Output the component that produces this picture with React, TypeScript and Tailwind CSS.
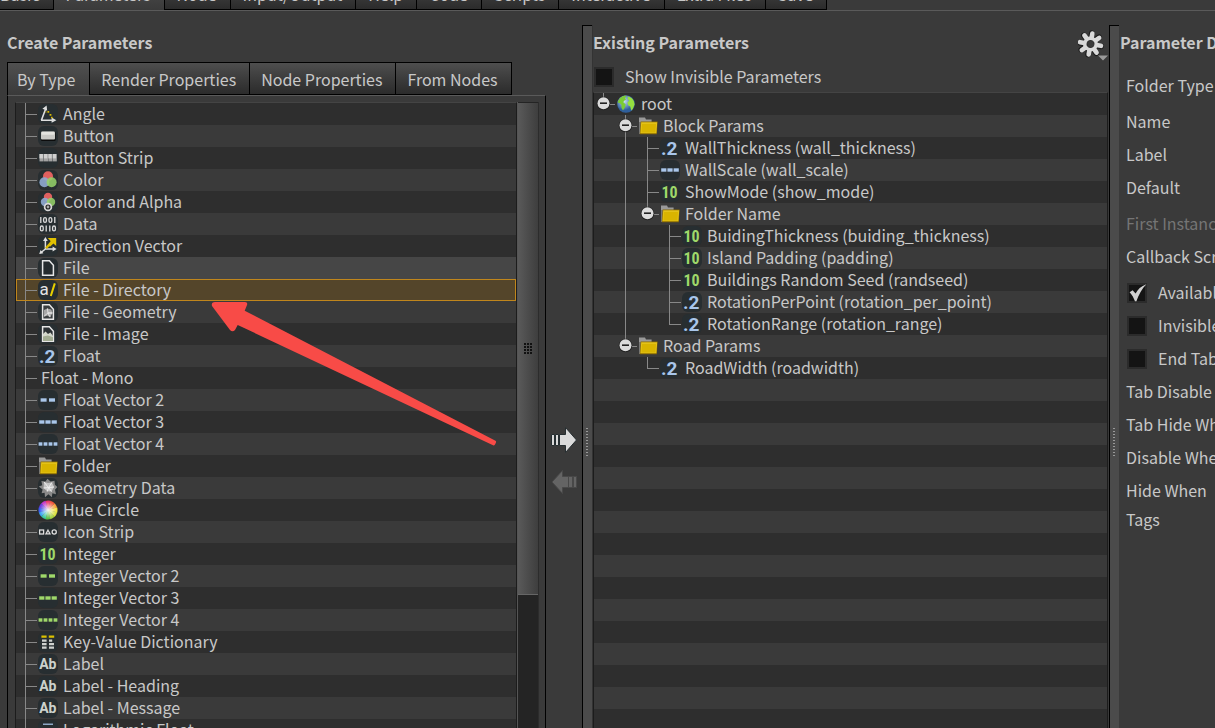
import React, { useState } from "react";

type Guide = "blank" | "line" | "tee" | "ell" | "root" | "open" | "last";

const GREEN = "#9fd86a";
const BLUE = "#a9c6ea";

function GuideCell({ kind }: { kind: Guide }) {
  const node = kind === "root" || kind === "open" || kind === "last";
  const up = kind !== "blank";
  const down = kind === "line" || kind === "tee" || kind === "open";
  return (
    <svg className="h-[22px] w-[22px] shrink-0" viewBox="0 0 22 22" aria-hidden="true">
      <g fill="#888">
        {up && <rect x="9" y="0" width="1" height="11" />}
        {down && <rect x="9" y="11" width="1" height="11" />}
        {(kind === "tee" || kind === "ell") && <rect x="9" y="11" width="12" height="1" />}
        {node && <rect x="15" y="11" width="6" height="1" />}
      </g>
      {node && (
        <g>
          <circle cx="9.5" cy="10.5" r="6.8" fill="#222" />
          <circle cx="9.5" cy="10.2" r="6" fill="#dcdcdc" />
          <rect x="6" y="9.4" width="7" height="1.6" fill="#222" />
        </g>
      )}
    </svg>
  );
}

function dashes(xs: number[], w: number, color: string) {
  return xs.map((x) => <rect key={x} x={x} y="8.3" width={w} height="3.4" fill={color} />);
}

function ColorDiscs({ r, cy }: { r: number; cy: number }) {
  return (
    <g>
      <circle cx="10" cy={cy} r={r} fill="#e0605f" />
      <circle cx={10 - r * 0.72} cy={cy + r * 1.2} r={r} fill="#8ea9cf" fillOpacity=".92" />
      <circle cx={10 + r * 0.72} cy={cy + r * 1.2} r={r} fill="#94d069" fillOpacity=".88" />
    </g>
  );
}

const hues = ["#f0e040", "#f5a03a", "#f0563a", "#e83a6c", "#c43ac8", "#6a3ae0", "#3a5cf0", "#3aa4f0", "#3ac8a0", "#5cc048", "#a4d040", "#d8e040"];

function sheet(fill: string) {
  return <path d="M4.6 2.8h6.8l4 4.4v10h-10.8z" fill={fill} stroke="#e6e6e6" strokeWidth="1.5" />;
}

function glyph(name: string) {
  switch (name) {
    case "angle":
      return (
        <g>
          <path d="M3.4 16.2L7.6 5M3 16.2H15" stroke="#dedede" strokeWidth="1.6" fill="none" />
          <path d="M8.6 1.4l.6 5.4-4.8-2zM18.4 16.2l-4.8-2.6v5.2z" fill="#dedede" />
          <path d="M9.4 7h1.8v1.8H9.4zM11.6 10h1.8v1.8h-1.8zM13 12.8h1.6v1.4H13zM7.4 7.6h1v1h-1z" fill="#d8b800" />
        </g>
      );
    case "button":
      return (
        <g>
          <rect x="3" y="6" width="14.6" height="9" rx="1" fill="#0c0c0c" />
          <rect x="3" y="5.4" width="14" height="8" rx="1" fill="#c9c9c5" />
          <rect x="3.6" y="5.8" width="12.8" height="3" rx="1" fill="#e4e4e0" />
        </g>
      );
    case "strip":
      return (
        <g>
          {[1.5, 5.9, 10.3, 14.7].map((x) => (
            <g key={x}>
              <rect x={x} y="6" width="4.1" height="7.4" fill="#a2a2a2" />
              <rect x={x} y="6" width="3.4" height="4.4" fill="#cfcfcf" />
            </g>
          ))}
        </g>
      );
    case "color":
      return <ColorDiscs r={5} cy={6.2} />;
    case "alpha":
      return (
        <g>
          <ColorDiscs r={4.2} cy={5} />
          <circle cx="10" cy="15" r="3.4" fill="#222" stroke="#d8d8d8" strokeWidth="1.7" />
          <circle cx="10" cy="15" r="1.4" fill="#aaa" />
        </g>
      );
    case "data":
      return (
        <g fill="none" stroke="#dcdcdc" strokeWidth="1.3">
          <path d="M2.8 3v6M16.8 3v6M8.2 11.4v6M11.8 11.4v6" />
          <rect x="5.6" y="3.6" width="2.8" height="4.8" rx="1.4" />
          <rect x="11" y="3.6" width="2.8" height="4.8" rx="1.4" />
          <rect x="2.4" y="12" width="2.8" height="4.8" rx="1.4" />
          <rect x="14.6" y="12" width="2.8" height="4.8" rx="1.4" />
        </g>
      );
    case "vector":
      return (
        <g>
          <path d="M7.4 4v9h8M7.4 13l-5 4" stroke="#dedede" strokeWidth="1.5" fill="none" />
          <path d="M7.4 1l2.4 4H5zM18.6 13l-4-2.4v4.8zM1.2 18l1.4-4 2.8 3.2z" fill="#dedede" />
          <path d="M8 12.2l6-6.6" stroke="#d8b800" strokeWidth="2.4" />
          <path d="M9.8 2h8.4v8l-2.8-2.6-3.4 3.4-2-2 3-3.2z" fill="#e0c000" />
        </g>
      );
    case "file":
      return sheet("#252b2e");
    case "geofile":
      return (
        <g>
          {sheet("#3a3e40")}
          <path d="M6 8l3.4-1.6 4 1.2 1 3.4-2.2 4.4-2.8-2-3.4 1.4z" fill="#a8a8a8" />
          <path d="M9.4 6.4l.6 4.6 4.4 0-4.4 0-3.8 3M10 11l2 4" stroke="#eee" strokeWidth=".8" fill="none" />
        </g>
      );
    case "imgfile":
      return (
        <g>
          {sheet("#2c3134")}
          <path d="M5 10l2.6-2.6L10 10l2.4-1.6L15 12v5H5z" fill="#d4d8cc" />
          <path d="M5 12.6l5-1 5 1.6V17H5z" fill="#a3ad93" />
        </g>
      );
    case "dir":
      return (
        <g>
          <text x="1.6" y="15.2" fontSize="17" fill="#e4e4e4" fontFamily="Roboto, sans-serif">a</text>
          <path d="M12.8 16L16.8 3.4" stroke="#e8d000" strokeWidth="2" />
        </g>
      );
    case "float":
      return (
        <text x="1" y="16.6" fontSize="19" fontWeight="700" fill={BLUE} fontFamily="Roboto, sans-serif">.2</text>
      );
    case "int":
      return (
        <text x="1.4" y="16" fontSize="16" fontWeight="700" fill={GREEN} fontFamily="Roboto Condensed, Roboto, sans-serif">10</text>
      );
    case "label":
      return (
        <text x="1.2" y="15.2" fontSize="14" fontWeight="700" fill="#cdd2cc" fontFamily="Roboto, sans-serif">Ab</text>
      );
    case "f2":
      return dashes([2.6, 11], 6, BLUE);
    case "f3":
      return dashes([1.2, 7.4, 13.6], 5.2, BLUE);
    case "f4":
      return dashes([0.6, 5.6, 10.6, 15.6], 3.8, BLUE);
    case "i2":
      return dashes([2.6, 11], 6, GREEN);
    case "i3":
      return dashes([1.2, 7.4, 13.6], 5.2, GREEN);
    case "i4":
      return dashes([0.6, 5.6, 10.6, 15.6], 3.8, GREEN);
    case "geo":
      return (
        <g>
          <path d="M9.5 .8l3 2.8 4-.8.4 4L19.4 9l-2.4 2.8 1 4.4-3.6-1-.6 4-3.4-3L7 19.2l-.4-4.4-3 .4 1-3.6L.8 8.6l3.4-1.4L3.4 3l4 .6z" fill="#8a8a8a" />
          <path d="M6 4l4 1 4-.6 2 4.6-2.4 4.6-4.4-.4L5.6 10z" fill="#c6c6c6" />
          <path d="M6 4l4.6 5.6L14 4.4M5.6 10l5-.4L16 9M10.6 9.6l-1.4 4M10.6 9.6l3 4" stroke="#f2f2f2" strokeWidth=".9" fill="none" />
        </g>
      );
    case "hue":
      return (
        <g>
          {hues.map((c, i) => {
            const a = (-i * Math.PI) / 6 + 0.26;
            const b = a - Math.PI / 6 - 0.02;
            return (
              <path
                key={c}
                d={`M10 10L${10 + 9.5 * Math.cos(a)} ${10 + 9.5 * Math.sin(a)}A9.5 9.5 0 0 0 ${10 + 9.5 * Math.cos(b)} ${10 + 9.5 * Math.sin(b)}Z`}
                fill={c}
              />
            );
          })}
          <circle cx="10" cy="10" r="9.5" fill="url(#hueCore)" />
          <defs>
            <radialGradient id="hueCore">
              <stop offset="0" stopColor="#fff" stopOpacity=".95" />
              <stop offset=".9" stopColor="#fff" stopOpacity="0" />
            </radialGradient>
          </defs>
        </g>
      );
    case "icons":
      return (
        <g fill="none" stroke="#dedede" strokeWidth="1.3">
          <rect x="1.6" y="8" width="4" height="4" />
          <path d="M10 8.2l2 3.6H8z" />
          <circle cx="16.2" cy="10" r="2.1" />
        </g>
      );
    case "dict":
      return (
        <g>
          <path d="M3.4 3.6h5.2v2.2H3.4zM10.8 3.6h5.4v2.2h-5.4z" fill="#dcc000" />
          <path d="M4 7.5h4.6v2.2H4zM4 11h4.6v2.2H4zM4 14.5h4.6v2.2H4zM11 7.5h3.2v2.2H11zM11 11h5v2.2h-5zM11 14.5h5v2.2h-5z" fill="#cfd2cf" />
        </g>
      );
    case "log":
      return <rect x="5" y="3.6" width="10" height="1.2" fill={BLUE} />;
    case "folder":
      return (
        <g>
          <path d="M1 1.4h6l1 2h5.6v4H1z" fill="#9a9a9a" />
          <path d="M1 6h2v12H1z" fill="#777" />
          <path d="M2.6 5.6h17l-.8 12.6H1.8z" fill="#8a6a00" />
          <path d="M3.2 6.2h16l-.8 11H2.4z" fill="#e3c21a" />
          <path d="M4 8h14l-.6 8.4H3.4z" fill="#d9b400" />
        </g>
      );
    case "globe":
      return (
        <g>
          <defs>
            <radialGradient id="sea" cx=".4" cy=".35">
              <stop offset="0" stopColor="#c8e0f4" />
              <stop offset="1" stopColor="#2f5f9c" />
            </radialGradient>
          </defs>
          <circle cx="10" cy="10" r="8.8" fill="url(#sea)" />
          <path d="M1.6 8.6C2.4 5 5 2.2 9 1.400l1.600 1.200-1.800 1.400 1.200 1.600-2.200 1.400-.4 1.600 2.200 1.600-.6 3-2 3.200-1.600-3 .2-2.400-2-2z" fill="#7ccc34" />
          <path d="M11.600 2.600c3 0 5.400 2.200 6.400 5l.6 3-1.800 4.400-1.600 1.400-1-4-2-1.200-.8-2.800 1.800-1.600-1.400-1.600z" fill="#96e040" />
        </g>
      );
    default:
      return null;
  }
}

const bare = new Set(["folder", "globe", "hue"]);

function Icon({ name }: { name: string }) {
  return (
    <svg className="h-5 w-5 shrink-0" viewBox="0 0 20 20" aria-hidden="true">
      {!bare.has(name) && <rect x="0" y="0" width="20" height="20" rx="6" fill="#272e31" />}
      {glyph(name)}
    </svg>
  );
}

function TreeRow({
  guides,
  icon,
  label,
  selected,
  hovered,
  onSelect,
}: {
  guides: Guide[];
  icon?: string;
  label: string;
  selected?: boolean;
  hovered?: boolean;
  onSelect?: () => void;
}) {
  return (
    <li
      role="treeitem"
      aria-selected={!!selected}
      onClick={onSelect}
      className={
        "flex h-[22px] items-center whitespace-nowrap leading-[20px] " +
        (selected ? "bg-[#54452a] outline outline-1 -outline-offset-1 outline-[#c0861c]" : hovered ? "bg-[#464646]" : "")
      }
    >
      {guides.map((g, i) => (
        <GuideCell key={i} kind={g} />
      ))}
      {icon && <Icon name={icon} />}
      <span className={icon ? "pb-[2px] pl-[5px]" : "pb-[2px] pl-[3px]"}>{label}</span>
    </li>
  );
}

const types: [string, string | undefined][] = [
  ["Angle", "angle"],
  ["Button", "button"],
  ["Button Strip", "strip"],
  ["Color", "color"],
  ["Color and Alpha", "alpha"],
  ["Data", "data"],
  ["Direction Vector", "vector"],
  ["File", "file"],
  ["File - Directory", "dir"],
  ["File - Geometry", "geofile"],
  ["File - Image", "imgfile"],
  ["Float", "float"],
  ["Float - Mono", undefined],
  ["Float Vector 2", "f2"],
  ["Float Vector 3", "f3"],
  ["Float Vector 4", "f4"],
  ["Folder", "folder"],
  ["Geometry Data", "geo"],
  ["Hue Circle", "hue"],
  ["Icon Strip", "icons"],
  ["Integer", "int"],
  ["Integer Vector 2", "i2"],
  ["Integer Vector 3", "i3"],
  ["Integer Vector 4", "i4"],
  ["Key-Value Dictionary", "dict"],
  ["Label", "label"],
  ["Label - Heading", "label"],
  ["Label - Message", "label"],
  ["Logarithmic Float", "log"],
];

const params: { guides: Guide[]; icon: string; label: string }[] = [
  { guides: ["root"], icon: "globe", label: "root" },
  { guides: ["blank", "open"], icon: "folder", label: "Block Params" },
  { guides: ["blank", "line", "tee"], icon: "float", label: "WallThickness (wall_thickness)" },
  { guides: ["blank", "line", "tee"], icon: "f3", label: "WallScale (wall_scale)" },
  { guides: ["blank", "line", "tee"], icon: "int", label: "ShowMode (show_mode)" },
  { guides: ["blank", "line", "last"], icon: "folder", label: "Folder Name" },
  { guides: ["blank", "line", "blank", "tee"], icon: "int", label: "BuidingThickness (buiding_thickness)" },
  { guides: ["blank", "line", "blank", "tee"], icon: "int", label: "Island Padding (padding)" },
  { guides: ["blank", "line", "blank", "tee"], icon: "int", label: "Buildings Random Seed (randseed)" },
  { guides: ["blank", "line", "blank", "tee"], icon: "float", label: "RotationPerPoint (rotation_per_point)" },
  { guides: ["blank", "line", "blank", "ell"], icon: "float", label: "RotationRange (rotation_range)" },
  { guides: ["blank", "last"], icon: "folder", label: "Road Params" },
  { guides: ["blank", "blank", "ell"], icon: "float", label: "RoadWidth (roadwidth)" },
];

const stripes =
  "bg-[repeating-linear-gradient(to_bottom,#2e2e2e_0,#2e2e2e_22px,#3a3a3a_22px,#3a3a3a_44px)]";

function Tabs({ names, active, label, wide }: { names: string[]; active: number; label: string; wide?: boolean }) {
  const [current, setCurrent] = useState(active);
  return (
    <div role="tablist" aria-label={label} className="flex">
      {names.map((n, i) => (
        <button
          key={n}
          role="tab"
          aria-selected={i === current}
          onClick={() => setCurrent(i)}
          className={
            "h-[33px] shrink-0 whitespace-nowrap border-t border-r border-black pr-[13px] leading-[22px] first:border-l first:pl-[9px] " +
            (wide ? "pl-[12px] " : "pl-[11px] first:pr-[14px] ") +
            (i === current
              ? "bg-linear-to-b from-[#505050] to-[#3a3a3a] pb-px"
              : "border-b bg-linear-to-b from-[#4e4e4e] to-[#2b2b2b]")
          }
        >
          {n}
        </button>
      ))}
    </div>
  );
}

function Check({ id, label, checked, className }: { id: string; label: string; checked?: boolean; className: string }) {
  return (
    <div className={"flex items-center " + className}>
      <span className="relative h-5 w-5 shrink-0">
        <input
          id={id}
          type="checkbox"
          defaultChecked={checked}
          className="peer block h-5 w-5 appearance-none border-2 border-[#2b2b2b] bg-[#141414]"
        />
        <svg
          className="pointer-events-none absolute inset-0 hidden h-5 w-5 peer-checked:block"
          viewBox="0 0 20 20"
          aria-hidden="true"
        >
          <path d="M2.6 9.2l3-2 3 3.4C10.6 6.6 14 3 19.4 1.2 15 5.6 11.6 11.6 9.4 18.2H8C6.6 14.6 5 11.6 2.6 9.2z" fill="#d2d2d2" />
        </svg>
      </span>
      <label htmlFor={id} className="pb-[2px] pl-[11px] whitespace-nowrap">
        {label}
      </label>
    </div>
  );
}

function Splitter() {
  return (
    <div role="separator" aria-orientation="vertical" className="relative border-t border-l border-black bg-[#4b4b4b]">
      <svg className="absolute top-[402px] left-[3px] h-[30px] w-[2px]" viewBox="0 0 2 30" aria-hidden="true">
        {Array.from({ length: 10 }, (_, i) => (
          <rect key={i} x="0" y={i * 3} width="2" height="1" fill="#999" />
        ))}
      </svg>
    </div>
  );
}

const groups = [["Folder Type"], ["Name", "Label", "Default"], ["First Instance", "Callback Script"]];

export default function App() {
  const [selected, setSelected] = useState("File - Directory");
  return (
    <div className="relative flex h-screen flex-col overflow-hidden bg-[#3a3a3a] font-['Noto_Sans_CJK_SC',sans-serif] text-[16px] text-[#c8c8c8]">
      <div className="flex h-[11px] shrink-0 items-end overflow-hidden border-b border-[#5a5a5a]">
        <div className="-ml-[10px]">
          <Tabs
            wide
            label="Sections"
            active={1}
            names={["Basic", "Parameters", "Node", "Input/Output", "Help", "Code", "Scripts", "Interactive", "Extra Files", "Save"]}
          />
        </div>
      </div>

      <main className="mt-[14px] grid min-h-0 flex-1 grid-cols-[582fr_10px_517fr_10px_96fr] grid-rows-1">
        <section className="flex min-h-0 min-w-0 flex-col pl-[7px]">
          <h2 className="h-[37px] shrink-0 pt-[6px] leading-[22px] font-bold">Create Parameters</h2>
          <Tabs label="Parameter sources" active={0} names={["By Type", "Render Properties", "Node Properties", "From Nodes"]} />
          <div className="flex min-h-0 flex-1">
            <div className="flex min-h-0 min-w-0 flex-1 border-x border-t border-x-black border-t-[#5a5a5a] pt-[6px] pr-[6px] pl-[7px]">
              <ul
                role="tree"
                aria-label="Parameter types"
                className={"min-w-0 flex-1 overflow-hidden border-x border-t border-x-[#1c1c1c] border-t-[#444] " + stripes}
              >
                {types.map(([name, icon]) => (
                  <TreeRow
                    key={name}
                    guides={["tee"]}
                    icon={icon}
                    label={name}
                    selected={name === selected}
                    hovered={name === "File"}
                    onSelect={() => setSelected(name)}
                  />
                ))}
              </ul>
              <div className="w-[22px] shrink-0 border-x border-l-[#555] border-r-[#2c2c2c] bg-[#242424] pt-px">
                <div className="flex h-[492px] items-center justify-center border-b border-[#666] bg-linear-to-r from-[#5a5a5a] to-[#3e3e3e]">
                  <svg className="h-[11px] w-[8px]" viewBox="0 0 8 11" aria-hidden="true">
                    {[0, 3, 6].map((x) =>
                      [0, 3, 6, 9].map((y) => <rect key={`${x}-${y}`} x={x} y={y} width="2" height="2" fill="#111" />)
                    )}
                  </svg>
                </div>
              </div>
            </div>
            <div className="flex w-9 shrink-0 flex-col items-center gap-[14px] pt-[331px]">
              <button aria-label="Add parameter">
                <svg className="h-7 w-7" viewBox="0 0 28 28" aria-hidden="true">
                  <path
                    d="M1.500 8.500h3v11h-3zM5.500 8.500h3v11h-3zM9.500 8.500h6V1.500L26.500 14 15.500 26.500v-7h-6z"
                    fill="#dadada"
                    stroke="#262e31"
                    strokeWidth="1"
                  />
                </svg>
              </button>
              <button aria-label="Remove parameter">
                <svg className="h-7 w-7" viewBox="0 0 28 28" aria-hidden="true">
                  <path
                    d="M26.500 8.500h-3v11h3zM22.500 8.500h-4v11h4zM18.500 8.500H12.500V2.500L2 14l10.500 11.500v-6h6z"
                    fill="#646464"
                    stroke="#484848"
                    strokeWidth="1"
                  />
                </svg>
              </button>
            </div>
          </div>
        </section>

        <Splitter />

        <section className="flex min-h-0 min-w-0 flex-col border-l border-[#333]">
          <div className="flex h-[37px] shrink-0 justify-between">
            <h2 className="pt-[6px] leading-[22px] font-bold">Existing Parameters</h2>
            <button aria-label="Parameter options" className="pt-1 pr-px">
              <svg className="h-8 w-[30px]" viewBox="0 0 30 32" aria-hidden="true">
                <g transform="translate(12.5 14) rotate(10)">
                  <g stroke="#1c1c1c" strokeWidth="5.8" strokeLinecap="round">
                    {[0, 45, 90, 135].map((a) => (
                      <path key={a} d="M-10.8 .5H10.8" transform={`rotate(${a})`} />
                    ))}
                  </g>
                  <g stroke="#d9d9d9" strokeWidth="4.6" strokeLinecap="round">
                    {[0, 45, 90, 135].map((a) => (
                      <path key={a} d="M-10.6 0H10.6" transform={`rotate(${a})`} />
                    ))}
                  </g>
                  <circle r="7.4" fill="#d9d9d9" />
                  <circle r="3.5" fill="#3a3a3a" stroke="#222" strokeWidth=".8" />
                </g>
                <path d="M20 25.500h10l-5 5z" fill="#9a9a9a" />
              </svg>
            </button>
          </div>
          <Check id="invisible-all" label="Show Invisible Parameters" className="h-[30px] shrink-0 pl-px" />
          <ul
            role="tree"
            aria-label="Existing parameters"
            className={"mr-px min-h-0 flex-1 overflow-hidden border-x border-t border-x-[#1c1c1c] border-t-[#444] " + stripes}
          >
            {params.map((p) => (
              <TreeRow key={p.label} {...p} />
            ))}
          </ul>
        </section>

        <Splitter />

        <section className="min-w-0 overflow-hidden pl-px whitespace-nowrap">
          <h2 className="h-[37px] pt-[6px] leading-[22px] font-bold">Parameter Description</h2>
          <div className="flex flex-col gap-[3px] pt-[7px] pl-[6px]">
            {groups.map((g) => (
              <div key={g[0]}>
                {g.map((t) => (
                  <div key={t} className={"flex h-[33px] items-center pb-[2px] " + (t === "First Instance" ? "text-[#757575]" : "")}>
                    {t}
                  </div>
                ))}
              </div>
            ))}
            <div>
              <Check id="available" label="Available for Import" checked className="h-[33px] pl-px" />
              <Check id="invisible" label="Invisible" className="h-[33px] pl-px" />
              <Check id="end-tab" label="End Tab Group" className="h-[33px] pl-px" />
              {["Tab Disable When", "Tab Hide When", "Disable When", "Hide When"].map((t) => (
                <div key={t} className="flex h-[33px] items-center pb-[2px]">
                  {t}
                </div>
              ))}
              <div className="flex h-[25px] items-center pb-[2px]">Tags</div>
            </div>
          </div>
        </section>
      </main>

      <svg
        className="pointer-events-none absolute top-[300px] left-[210px] h-[148px] w-[290px]"
        viewBox="210 300 290 148"
        aria-hidden="true"
      >
        <path
          d="M212 306Q211 302 215 302H245Q248 302 247 305L244.7 310.7 495 440.5Q496.5 441 496 442.5L495 444.5Q494 446 492.5 445L237.7 325 235 330Q232.5 332.5 230 330Z"
          fill="#f84b47"
        />
      </svg>
    </div>
  );
}
